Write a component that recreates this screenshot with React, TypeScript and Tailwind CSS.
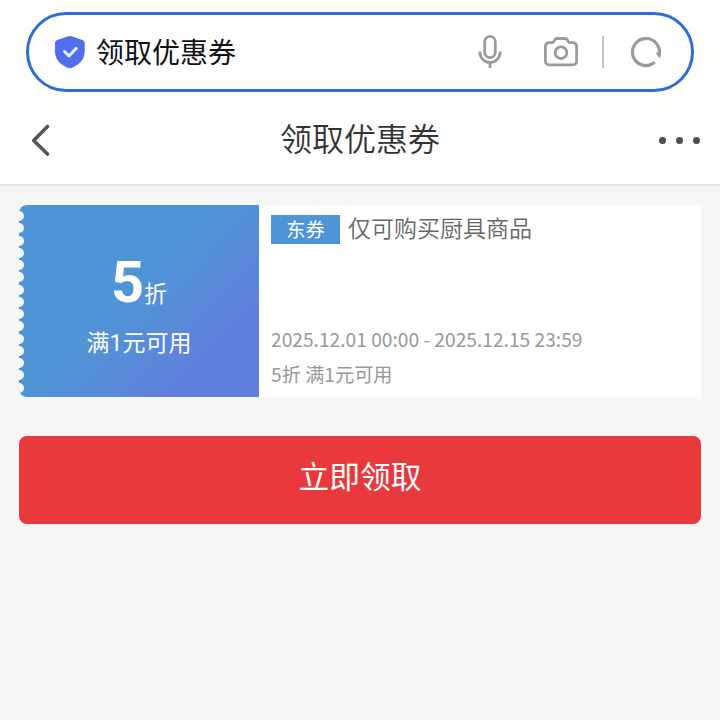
const NOTCH_COUNT = 15;

function ShieldIcon() {
  return (
    <svg width="32" height="34" viewBox="0 0 32 34" fill="none">
      <path
        d="M14.2 1.3a4.5 4.5 0 0 1 3.4 0l10.8 3.6a3.2 3.2 0 0 1 2.3 3v8.6c0 7-4.2 12.3-11.9 16a6.5 6.5 0 0 1-5.7 0C5.3 28.8 1 23.5 1 16.5V7.9a3.2 3.2 0 0 1 2.3-3z"
        fill="#506eee"
      />
      <path d="m10.5 16.5 4.5 4.5 7.2-7.6" stroke="#e4f0ff" strokeWidth="3" strokeLinecap="round" strokeLinejoin="round" />
    </svg>
  );
}

function MicIcon() {
  return (
    <svg width="24" height="36" viewBox="0 0 24 36" fill="none" stroke="#9b9b9b" strokeWidth="2.8">
      <rect x="6.7" y="2.4" width="10.6" height="21.2" rx="5.3" />
      <path d="M1.9 17.500v.8a10.1 10.1 0 0 0 20.2 0v-.8M12 28.400V34" />
    </svg>
  );
}

function CameraIcon() {
  return (
    <svg width="36" height="32" viewBox="0 0 36 32" fill="none" stroke="#9b9b9b" strokeWidth="2.8">
      <path d="M6 6.600h2.500c1 0 1.700-.4 2.200-1.200l1-1.600c.6-.9 1.300-1.300 2.300-1.300h8c1 0 1.700.4 2.300 1.300l1 1.600c.5.800 1.200 1.200 2.200 1.200H30a3.600 3.600 0 0 1 3.600 3.600v15A3.600 3.600 0 0 1 30 28.800H6a3.600 3.600 0 0 1-3.600-3.600v-15A3.600 3.600 0 0 1 6 6.600z" />
      <circle cx="18" cy="16.700" r="5.800" />
    </svg>
  );
}

function RefreshIcon() {
  return (
    <svg width="32" height="32" viewBox="0 0 32 32" fill="none">
      <path d="M24.700 26.300A13.500 13.500 0 1 1 29 19.500" stroke="#9b9b9b" strokeWidth="3.2" />
      <path d="M25.600 16.500 30.600 16v5.500h-1.800z" fill="#9b9b9b" />
    </svg>
  );
}

function SearchBar() {
  return (
    <div className="mx-[26px] flex h-20 items-center rounded-full border-3 border-[#2f6fd0] bg-white pr-[29px] pl-[25px]">
      <ShieldIcon />
      <span className="mb-0.5 ml-2.5 text-[28px] leading-none text-[#111]">领取优惠券</span>
      <div className="ml-auto flex items-center">
        <MicIcon />
        <div className="ml-[41px]">
          <CameraIcon />
        </div>
        <div className="ml-[23px] h-8 w-0.5 bg-[#c6c6c6]" />
        <div className="ml-[26px]">
          <RefreshIcon />
        </div>
      </div>
    </div>
  );
}

function NavBar() {
  return (
    <div className="flex h-[94px] items-center border-b-2 border-[#e3e3e3] pr-5 pl-[31px]">
      <div className="flex flex-1 pt-1">
        <svg width="38" height="34" viewBox="0 0 38 34" fill="none" stroke="#55565c" strokeWidth="3.6" strokeLinecap="round" strokeLinejoin="round">
          <path d="M16.500 3.500 2.700 17.500l13.800 13.500" />
        </svg>
      </div>
      <h1 className="mr-[11px] pb-[3px] text-[32px] leading-none font-[350] text-[#333]">领取优惠券</h1>
      <div className="flex flex-1 items-center justify-end gap-[10px] pt-[5px]">
        <i className="size-[7px] rounded-full bg-[#4c4c4c]" />
        <i className="size-[7px] rounded-full bg-[#4c4c4c]" />
        <i className="size-[7px] rounded-full bg-[#4c4c4c]" />
      </div>
    </div>
  );
}

function Coupon() {
  return (
    <div className="flex h-48 bg-white">
      <div className="relative flex w-60 flex-col items-center overflow-hidden rounded-l-lg bg-linear-135 from-[#4f95d6] from-45% to-[#607fdc] to-80% text-white">
        {/* perforated edge */}
        <div className="absolute top-[6px] -left-[5px] flex flex-col gap-[2.28px]">
          {Array.from({ length: NOTCH_COUNT }, (_, i) => (
            <i key={i} className="size-[10px] rounded-full bg-[#f6fafd]" />
          ))}
        </div>
        <div className="mt-[45px] flex items-baseline">
          <span className="font-[Roboto,sans-serif] text-[57.6px] leading-[66px] font-bold">5</span>
          <span className="text-[23px] leading-none">折</span>
        </div>
        <div className="mt-[13px] font-[Roboto,'Noto_Sans_CJK_SC',sans-serif] text-[23px] leading-[30px]">满1元可用</div>
      </div>
      <div className="flex flex-1 flex-col pl-3">
        <div className="mt-[9px] flex items-center">
          <span className="mt-px flex h-[29px] w-[69px] items-center justify-center bg-[#4f95d6] text-[19.2px] leading-none text-white">东券</span>
          <span className="mb-[3px] ml-2 text-[23px] leading-[27px] font-[350] text-[#666]">仅可购买厨具商品</span>
        </div>
        <div className="mt-auto mb-[5px] text-[19.2px] leading-[35px] text-[#999]">
          <p>2025.12.01 00:00 - 2025.12.15 23:59</p>
          <p>5折 满1元可用</p>
        </div>
      </div>
    </div>
  );
}

export default function App() {
  return (
    <div className="min-h-screen bg-[#f6f6f6] font-['Noto_Sans_CJK_SC',sans-serif]">
      <header className="bg-white pt-3">
        <SearchBar />
        <NavBar />
      </header>
      <main className="px-[19px] pt-[19px]">
        <Coupon />
        <button className="mt-[39px] flex h-[88px] w-full items-center justify-center rounded-lg bg-[#e9393d] pb-[9px] text-[30.7px] text-white">
          立即领取
        </button>
      </main>
    </div>
  );
}
